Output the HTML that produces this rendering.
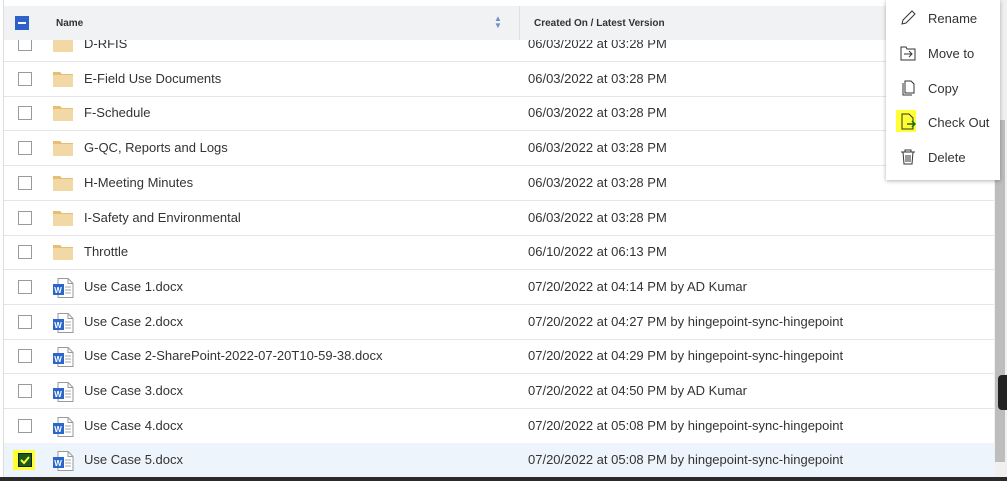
<!DOCTYPE html><html><head><style>
body{margin:0;width:1007px;height:481px;overflow:hidden;background:#fff;font-family:"Liberation Sans",sans-serif;position:relative}
.row{position:absolute;left:4px;width:990px;height:34px;border-bottom:1px solid #e3e5e8;font-size:13px;color:#333}
.cb{position:absolute;left:14px;top:10px;width:12px;height:12px;border:1px solid #9a9a9a;background:#fff}
.ic{position:absolute;left:48px;top:8px}
.nm{position:absolute;left:80px;top:9px}
.dt{position:absolute;left:524px;top:9px}
.hdr{position:absolute;left:4px;top:6px;width:990px;height:34px;background:#f1f2f3;font-size:10px;color:#333;font-weight:bold;z-index:2}
.menu{position:absolute;left:886px;top:0;width:114px;height:180px;background:#fff;box-shadow:0 1px 4px rgba(0,0,0,.3);font-size:13px;color:#333;z-index:5}
.mi{position:absolute;left:42px}
.mic{position:absolute;left:14px}
</style></head><body>
<svg width="0" height="0" style="position:absolute">
<defs>
<g id="fo"><path d="M1 2h7l2 2h11v13H1z" fill="#f2d8a5"/><path d="M1 2h7l2 2h11v1H1z" fill="#e7bf74"/></g>
<g id="wd"><path d="M6 0.5h10l5 5v14H6z" fill="#fff" stroke="#999"/><path d="M16 0.5v5h5" fill="none" stroke="#999"/><line x1="13" y1="9" x2="19" y2="9" stroke="#aaa"/><line x1="13" y1="12" x2="19" y2="12" stroke="#aaa"/><line x1="13" y1="15" x2="19" y2="15" stroke="#aaa"/><rect x="1" y="6" width="11" height="11" fill="#2b66c8"/></g>
</defs></svg>
<div style="position:absolute;left:3px;top:0;width:1px;height:481px;background:#ddd"></div>

<div class="row" style="top:27px"><div class="cb"></div><svg class="ic" width="22" height="20"><use href="#fo"/></svg><div class="nm">D-RFIS</div><div class="dt">06/03/2022 at 03:28 PM</div></div>
<div class="row" style="top:61.7px"><div class="cb"></div><svg class="ic" width="22" height="20"><use href="#fo"/></svg><div class="nm">E-Field Use Documents</div><div class="dt">06/03/2022 at 03:28 PM</div></div>
<div class="row" style="top:96.4px"><div class="cb"></div><svg class="ic" width="22" height="20"><use href="#fo"/></svg><div class="nm">F-Schedule</div><div class="dt">06/03/2022 at 03:28 PM</div></div>
<div class="row" style="top:131.1px"><div class="cb"></div><svg class="ic" width="22" height="20"><use href="#fo"/></svg><div class="nm">G-QC, Reports and Logs</div><div class="dt">06/03/2022 at 03:28 PM</div></div>
<div class="row" style="top:165.8px"><div class="cb"></div><svg class="ic" width="22" height="20"><use href="#fo"/></svg><div class="nm">H-Meeting Minutes</div><div class="dt">06/03/2022 at 03:28 PM</div></div>
<div class="row" style="top:200.5px"><div class="cb"></div><svg class="ic" width="22" height="20"><use href="#fo"/></svg><div class="nm">I-Safety and Environmental</div><div class="dt">06/03/2022 at 03:28 PM</div></div>
<div class="row" style="top:235.2px"><div class="cb"></div><svg class="ic" width="22" height="20"><use href="#fo"/></svg><div class="nm">Throttle</div><div class="dt">06/10/2022 at 06:13 PM</div></div>
<div class="row" style="top:269.9px"><div class="cb"></div><svg class="ic" width="22" height="20"><use href="#wd"/><text x="2.3" y="15" font-size="8" fill="#fff" font-weight="bold">W</text></svg><div class="nm">Use Case 1.docx</div><div class="dt">07/20/2022 at 04:14 PM by AD Kumar</div></div>
<div class="row" style="top:304.6px"><div class="cb"></div><svg class="ic" width="22" height="20"><use href="#wd"/><text x="2.3" y="15" font-size="8" fill="#fff" font-weight="bold">W</text></svg><div class="nm">Use Case 2.docx</div><div class="dt">07/20/2022 at 04:27 PM by hingepoint-sync-hingepoint</div></div>
<div class="row" style="top:339.3px"><div class="cb"></div><svg class="ic" width="22" height="20"><use href="#wd"/><text x="2.3" y="15" font-size="8" fill="#fff" font-weight="bold">W</text></svg><div class="nm">Use Case 2-SharePoint-2022-07-20T10-59-38.docx</div><div class="dt">07/20/2022 at 04:29 PM by hingepoint-sync-hingepoint</div></div>
<div class="row" style="top:374px"><div class="cb"></div><svg class="ic" width="22" height="20"><use href="#wd"/><text x="2.3" y="15" font-size="8" fill="#fff" font-weight="bold">W</text></svg><div class="nm">Use Case 3.docx</div><div class="dt">07/20/2022 at 04:50 PM by AD Kumar</div></div>
<div class="row" style="top:408.7px"><div class="cb"></div><svg class="ic" width="22" height="20"><use href="#wd"/><text x="2.3" y="15" font-size="8" fill="#fff" font-weight="bold">W</text></svg><div class="nm">Use Case 4.docx</div><div class="dt">07/20/2022 at 05:08 PM by hingepoint-sync-hingepoint</div></div>
<div class="row" style="top:443.4px;background:#eef4fb"><div style="position:absolute;left:9px;top:7px;width:22px;height:20px;background:#ffff33"></div><div class="cb" style="background:#1a5c1a;border-color:#123"><svg width="12" height="12" style="display:block"><path d="M2 6l3 3 5-6" stroke="#ffff33" stroke-width="2" fill="none"/></svg></div><svg class="ic" width="22" height="20"><use href="#wd"/><text x="2.3" y="15" font-size="8" fill="#fff" font-weight="bold">W</text></svg><div class="nm">Use Case 5.docx</div><div class="dt">07/20/2022 at 05:08 PM by hingepoint-sync-hingepoint</div></div>

<div class="hdr"><div style="position:absolute;left:11px;top:10px;width:14px;height:14px;background:#2f62c9"><div style="position:absolute;left:3px;top:6px;width:8px;height:2px;background:#fff"></div></div>
<span style="position:absolute;left:52px;top:12px">Name</span>
<span style="position:absolute;left:490px;top:9px;font-size:8px;color:#6b8fc7;line-height:7px">▲<br>▼</span>
<div style="position:absolute;left:515px;top:0;width:1px;height:34px;background:#e0e0e0"></div>
<span style="position:absolute;left:530px;top:12px">Created On / Latest Version</span></div>
<div style="position:absolute;left:994px;top:0;width:13px;height:481px;background:#f0f0f0;z-index:3"></div>
<div style="position:absolute;left:995px;top:120px;width:10px;height:342px;background:#bdbdbd;z-index:3"></div>
<div style="position:absolute;left:998px;top:375px;width:9px;height:35px;background:#222;border-radius:4px 0 0 4px;z-index:3"></div>
<div style="position:absolute;left:0;top:477px;width:1007px;height:4px;background:#2a2a2a;z-index:3"></div>
<div class="menu">
<svg class="mic" style="top:10px" width="16" height="16"><path d="M2 14l1-4 9-9 3 3-9 9z" fill="none" stroke="#333"/></svg><span class="mi" style="top:11px">Rename</span>
<svg class="mic" style="top:45px" width="16" height="16"><path d="M1 2h5l1 2h8v11H1z" fill="none" stroke="#333"/><path d="M4 9h8M9 6l3 3-3 3" fill="none" stroke="#333"/></svg><span class="mi" style="top:46px">Move to</span>
<svg class="mic" style="top:80px" width="16" height="16"><path d="M3 3v12h9" fill="none" stroke="#333"/><path d="M5 1h6l3 3v9H5z" fill="none" stroke="#333"/></svg><span class="mi" style="top:81px">Copy</span>
<div style="position:absolute;left:10px;top:110px;width:20px;height:22px;background:#ffff33"></div>
<svg class="mic" style="top:113px" width="16" height="18"><path d="M2 1h7l4 4v11H2z" fill="none" stroke="#333"/><path d="M7 11h8M12 8l3 3-3 3" fill="none" stroke="#1a6b1a" stroke-width="1.5"/></svg><span class="mi" style="top:115px">Check Out</span>
<svg class="mic" style="top:149px" width="16" height="16"><path d="M1 3h14M5 3V1h6v2M3 3l1 12h8l1-12M6 6v7M8 6v7M10 6v7" fill="none" stroke="#333"/></svg><span class="mi" style="top:150px">Delete</span>
</div>
</body></html>
